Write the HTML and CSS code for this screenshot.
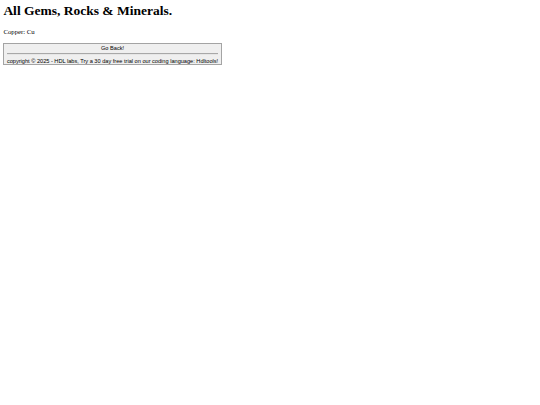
FILE: index.html
```html
<!DOCTYPE html>
<html lang="en">
<head>
<meta charset="utf-8">
<title>All Gems, Rocks &amp; Minerals.</title>
<link rel="stylesheet" href="styles.css">
</head>
<body class="page">
<h1 class="title">All Gems, Rocks &amp; Minerals.</h1>
<p class="entry">Copper: Cu</p>
<button class="back" type="button">Go Back!<hr class="rule"><span class="footer">copyright © 2025 - HDL labs, Try a 30 day free trial on our coding language: Hdltools!</span></button>
</body>
</html>
```

FILE: styles.css
```css
html {
  background: #ffffff;
}

.page {
  margin: 3.375px;
  font-family: "Liberation Serif", "Times New Roman", serif;
  color: #000000;
}

.title {
  margin: 0 0 9.05px 0;
  font-size: 13.5px;
  font-weight: bold;
  line-height: normal;
}

.entry {
  margin: 0 0 7.8px 0;
  font-size: 6.75px;
  line-height: normal;
}

.back {
  display: block;
  margin: 0;
  padding: 0.42px 2.53px;
  font-family: "Liberation Sans", Arial, sans-serif;
  font-size: 5.625px;
  line-height: normal;
  color: #000000;
  background: #efefef;
  border: 1px solid #a4a4a4;
  border-radius: 0;
  text-align: center;
  white-space: nowrap;
}

.rule {
  margin: 2.5px 0;
  border: none;
  border-top: 0.5px solid #a8a8a8;
  border-bottom: 0.5px solid #e6e6e6;
  height: 0;
}

.footer {
  display: block;
}
```
